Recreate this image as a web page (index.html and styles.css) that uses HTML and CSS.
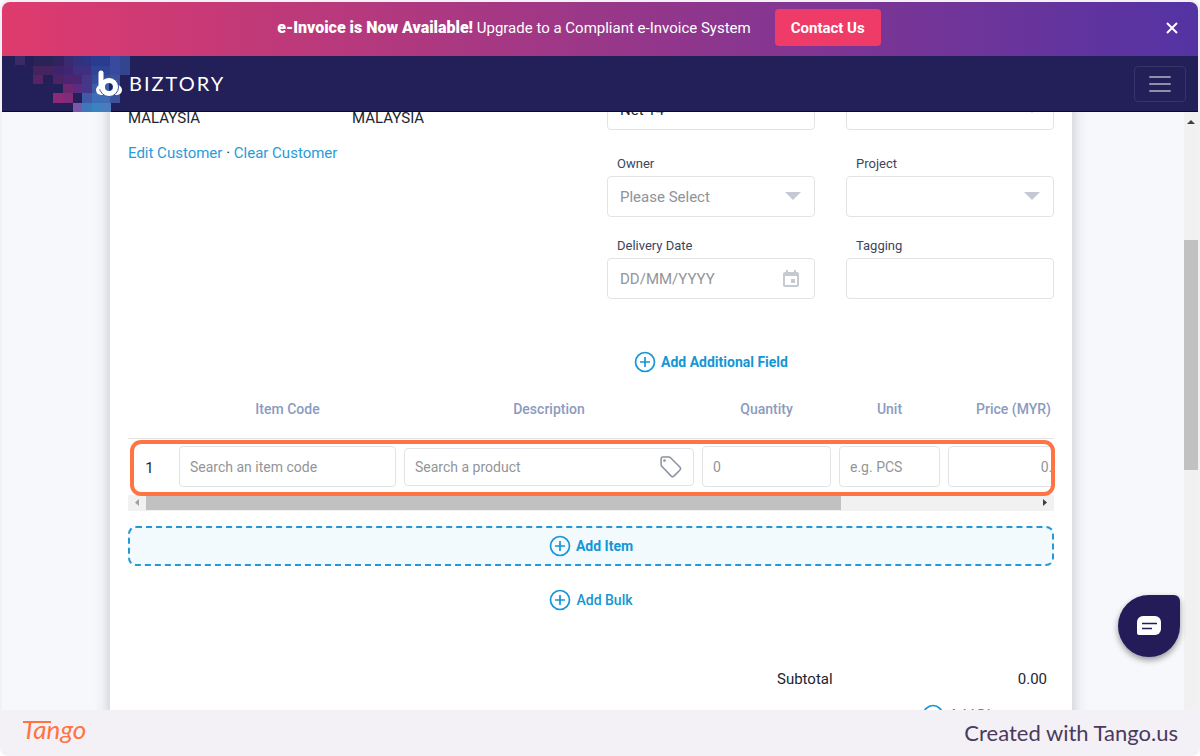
FILE: index.html
```html
<!DOCTYPE html>
<html lang="en">
<head>
<meta charset="utf-8">
<meta name="viewport" content="width=device-width, initial-scale=1">
<title>Biztory</title>
<link rel="stylesheet" href="styles.css">
</head>
<body>
<svg class="defs" width="0" height="0" aria-hidden="true">
  <symbol id="plus" viewBox="0 0 22 22"><circle cx="11" cy="11" r="9.5" /><path d="M11 6v10M6 11h10" /></symbol>
  <symbol id="caret" viewBox="0 0 16 8"><path d="M0 0h16L8 8z" /></symbol>
</svg>
<div class="frame">
  <div class="app">
    <div class="banner">
      <div class="banner-main">
        <p class="banner-text"><strong>e-Invoice is Now Available!</strong> Upgrade to a Compliant e-Invoice System</p>
        <button class="contact" type="button">Contact Us</button>
      </div>
      <button class="close" type="button" aria-label="Close">
        <svg width="12" height="12" viewBox="0 0 12 12"><path d="M1 1l10 10M11 1L1 11" /></svg>
      </button>
    </div>
    <header class="nav">
      <a class="brand" href="#" aria-label="Biztory">
        <svg class="mosaic" width="130" height="56" viewBox="0 0 130 56" shape-rendering="crispEdges">
          <path fill="#3a2a66" d="M13 0h10v9H13z" />
          <path fill="#292358" d="M32 0h20v10H32z" />
          <path fill="#30235f" d="M52 0h10v10H52z" />
          <path fill="#3a2a70" d="M62 0h9v10h-9z" />
          <path fill="#33307c" d="M71 0h9v10h-9z" />
          <path fill="#2c3483" d="M80 0h9v10h-9z" />
          <path fill="#2a3c90" d="M89 0h19v10H89z" />
          <path fill="#384a9e" d="M108 0h10v19h-10z" />
          <path fill="#33458f" d="M118 0h10v19h-10z" />
          <path fill="#45235f" d="M31 10h20v9H31z" />
          <path fill="#40246b" d="M51 10h11v9H51z" />
          <path fill="#402672" d="M62 10h9v9h-9z" />
          <path fill="#3d3080" d="M71 10h18v9H71z" />
          <path fill="#2f4494" d="M89 10h19v9H89z" />
          <path fill="#562464" d="M31 19h10v9H31z" />
          <path fill="#4c2364" d="M51 19h11v9H51z" />
          <path fill="#4b2571" d="M62 19h18v9H62z" />
          <path fill="#453688" d="M80 19h10v18H80z" />
          <path fill="#354c9b" d="M90 19h18v9H90z" />
          <path fill="#3b529d" d="M108 19h10v28h-10z" />
          <path fill="#6e286f" d="M61 28h10v9H61z" />
          <path fill="#5b2b82" d="M71 28h9v9h-9z" />
          <path fill="#3e5ba8" d="M90 28h18v9H90z" />
          <path fill="#8d2a77" d="M51 37h10v10H51z" />
          <path fill="#812b7b" d="M61 37h10v10H61z" />
          <path fill="#415aa7" d="M80 37h10v10H80z" />
          <path fill="#3d6db4" d="M90 37h18v10H90z" />
          <path fill="#7a56a8" d="M71 47h9v9h-9z" />
          <path fill="#3f78ba" d="M80 47h10v9H80z" />
          <path fill="#3a83c0" d="M90 47h10v9H90z" />
          <path fill="#4b7bbd" d="M100 47h9v9h-9z" />
        </svg>
        <svg class="mark" width="28" height="27" viewBox="0 0 28 27">
          <rect class="fill" x="1" y="15" width="26" height="10" rx="5" />
          <circle class="fill gap" cx="14" cy="17" r="9.5" />
          <path class="stem" d="M6 3v14" />
          <circle class="ring" cx="14" cy="17" r="6.3" />
          <path class="core" d="M14 13.600a3.400 3.400 0 0 1 0 6.800z" />
        </svg>
        <span class="wordmark">BIZTORY</span>
      </a>
      <button class="menu" type="button" aria-label="Menu">
        <svg width="22" height="18" viewBox="0 0 22 18"><path d="M1 2h20M1 9h20M1 16h20" /></svg>
      </button>
    </header>
    <div class="viewport">
      <main class="page">
        <form class="sheet">
          <div class="top">
            <section class="customer">
              <p>MALAYSIA</p>
              <p>MALAYSIA</p>
              <p class="links"><a href="#">Edit Customer</a> · <a href="#">Clear Customer</a></p>
            </section>
            <section class="fields">
              <div class="control first"><input class="box dark" type="text" value="Net 14" aria-label="Terms"></div>
              <div class="control first"><select class="box" aria-label="Currency"><option></option></select><svg class="caret" width="16" height="8"><use href="#caret" /></svg></div>
              <div class="field">
                <label for="owner">Owner</label>
                <div class="control"><select class="box" id="owner"><option>Please Select</option></select><svg class="caret" width="16" height="8"><use href="#caret" /></svg></div>
              </div>
              <div class="field">
                <label for="project">Project</label>
                <div class="control"><select class="box" id="project"><option></option></select><svg class="caret" width="16" height="8"><use href="#caret" /></svg></div>
              </div>
              <div class="field">
                <label for="delivery">Delivery Date</label>
                <div class="control"><input class="box" id="delivery" type="text" placeholder="DD/MM/YYYY">
                  <svg class="calendar" width="16" height="18" viewBox="0 0 16 18"><path fill-rule="evenodd" d="M3 0h2v2h6V0h2v2h1a2 2 0 0 1 2 2v11a2 2 0 0 1-2 2H2a2 2 0 0 1-2-2V4a2 2 0 0 1 2-2h1zM2 6v9h12V6zM8 9h4v4H8z" /></svg>
                </div>
              </div>
              <div class="field">
                <label for="tagging">Tagging</label>
                <div class="control"><input class="box" id="tagging" type="text"></div>
              </div>
              <button class="add bold" type="button"><svg width="22" height="22"><use href="#plus" /></svg>Add Additional Field</button>
            </section>
          </div>

          <section class="items">
            <div class="table-clip">
              <table>
                <colgroup><col class="c-no"><col class="c-code"><col class="c-desc"><col class="c-qty"><col class="c-unit"><col class="c-price"></colgroup>
                <thead><tr><th></th><th>Item Code</th><th>Description</th><th>Quantity</th><th>Unit</th><th>Price (MYR)</th></tr></thead>
                <tbody><tr>
                  <td class="no">1</td>
                  <td><input class="box" type="text" placeholder="Search an item code" aria-label="Item Code"></td>
                  <td><div class="control"><input class="box short" type="text" placeholder="Search a product" aria-label="Description">
                    <svg class="tag" width="24" height="24" viewBox="0 0 24 24"><path d="M3.500 2h6.200a3 3 0 0 1 2.100.9l9 9.200a2.200 2.200 0 0 1 0 3.100l-5.700 5.700a2.200 2.200 0 0 1-3.100 0l-9-9.300a3 3 0 0 1-.9-2.100V3.500A1.500 1.500 0 0 1 3.500 2z" /><circle cx="5.500" cy="5.500" r=".6" /></svg></div></td>
                  <td><input class="box" type="text" placeholder="0" aria-label="Quantity"></td>
                  <td><input class="box" type="text" placeholder="e.g. PCS" aria-label="Unit"></td>
                  <td><input class="box right" type="text" placeholder="0.00" aria-label="Price"></td>
                </tr></tbody>
              </table>
            </div>
            <div class="hbar" aria-hidden="true">
              <svg width="18" height="16" viewBox="0 0 18 16"><path fill="#a0a0a0" d="M11 4v7L7 7.500z" /></svg>
              <div class="hthumb"></div>
              <svg width="18" height="16" viewBox="0 0 18 16"><path fill="#404040" d="M7 4v7l4-3.500z" /></svg>
            </div>
            <div class="highlight"></div>
          </section>

          <button class="add bold add-item" type="button"><svg width="22" height="22"><use href="#plus" /></svg>Add Item</button>
          <button class="add medium add-bulk" type="button"><svg width="22" height="22"><use href="#plus" /></svg>Add Bulk</button>

          <section class="totals">
            <div class="subtotal"><span>Subtotal</span><output>0.00</output></div>
            <button class="add medium discount" type="button"><svg width="22" height="22"><use href="#plus" /></svg>Add Discount</button>
          </section>
        </form>
      </main>
      <div class="vbar" aria-hidden="true">
        <svg width="14" height="18" viewBox="0 0 14 18"><path fill="#404040" d="M3 12h8L7 8z" /></svg>
        <div class="vthumb"></div>
      </div>
      <button class="chat" type="button" aria-label="Chat">
        <svg width="26" height="20" viewBox="0 0 26 20"><path fill="#fff" d="M7 0h12a6 6 0 0 1 6 6v7a6 6 0 0 1-6 6H3a2 2 0 0 1-2-2V6a6 6 0 0 1 6-6z" /><path class="lines" d="M6 7.500h15M6 12.500h10" /></svg>
      </button>
    </div>
  </div>
  <footer class="foot">
    <svg class="tango" width="80" height="42" viewBox="0 0 80 42" role="img" aria-label="Tango"><text x="2" y="27">Tango</text><path d="M3 10h28" /></svg>
    <span class="credit">Created with Tango.us</span>
  </footer>
</div>
</body>
</html>
```
FILE: styles.css
```css
* { box-sizing: border-box; }
body {
  margin: 0;
  font-family: Roboto, "Liberation Sans", sans-serif;
  font-size: 15px;
  color: #21252f;
  background: #fff;
}
p { margin: 0; }
a { color: #2a9bd8; text-decoration: none; }
button, input, select { font: inherit; }
button { cursor: pointer; padding: 0; border: 0; background: none; }
.defs { position: absolute; }

.frame {
  display: flex;
  flex-direction: column;
  height: 100vh;
  padding: 2px 2px 0;
  background: #f3f1f6;
  border-radius: 8px;
}
.app {
  flex: 1;
  min-height: 0;
  display: flex;
  flex-direction: column;
  overflow: hidden;
  border-radius: 8px 8px 0 0;
}

.banner {
  display: flex;
  align-items: center;
  height: 54px;
  color: #fff;
  background: linear-gradient(90deg, #df3b6d, #5433a4);
}
.banner-main {
  flex: 1;
  display: flex;
  align-items: center;
  justify-content: center;
  gap: 24px;
  padding-bottom: 3px;
}
.banner-text strong { font-size: 16px; font-weight: 900; }
.contact {
  height: 37px;
  padding: 0 16px;
  color: #fff;
  font-weight: 700;
  background: #ee3b68;
  border-radius: 4px;
}
.close { width: 42px; height: 40px; padding-right: 11px; }
.close path { fill: none; stroke: #fff; stroke-width: 2; }

.nav {
  display: flex;
  align-items: center;
  justify-content: space-between;
  height: 56px;
  padding-right: 12px;
  background: #231f58;
  border-bottom: 1px solid #0c0737;
}
.brand {
  position: relative;
  display: flex;
  align-items: center;
  gap: 6px;
  height: 56px;
  padding-left: 93px;
  color: #fff;
}
.mosaic { position: absolute; left: 0; top: 0; }
.mark, .wordmark { position: relative; }
.mark .fill { fill: #fff; }
.mark .gap { stroke: #35509c; stroke-width: 1; }
.mark .stem { fill: none; stroke: #fff; stroke-width: 5; stroke-linecap: round; }
.mark .ring { fill: #3a62ac; stroke: #fff; stroke-width: 4.5; }
.mark .core { fill: #231f58; }
.wordmark { padding-bottom: 2px; font-family: Lato, sans-serif; font-size: 20px; letter-spacing: 2px; }
.menu {
  width: 52px;
  height: 36px;
  border: 1px solid #38346a;
  border-radius: 4px;
}
.menu svg { display: block; margin: auto; }
.menu path { stroke: #918fac; stroke-width: 2; stroke-linecap: round; }

.viewport { position: relative; flex: 1; min-height: 0; display: flex; overflow: hidden; }
.page { flex: 1; min-width: 0; padding: 0 112px 0 108px; background: #f7f8fc; }
.sheet {
  margin-top: -23px;
  padding: 0 18px 40px;
  background: #fff;
  box-shadow: 0 0 14px rgba(40, 45, 70, .28);
}
.top { display: flex; justify-content: space-between; }
.customer {
  display: grid;
  grid-template-columns: 224px 200px;
  align-content: start;
  row-gap: 15px;
  padding-top: 19px;
  line-height: 20px;
}
.links { grid-column: 1 / 3; }
.fields {
  display: grid;
  grid-template-columns: 208px 208px;
  column-gap: 31px;
  row-gap: 17px;
}
.first { margin-bottom: 5px; }
.field label {
  display: block;
  height: 24px;
  padding-left: 10px;
  font-size: 13px;
  line-height: 23px;
  color: #3c4560;
}
.control { position: relative; }
.box {
  display: block;
  width: 100%;
  height: 41px;
  padding: 0 10px;
  font-size: 14px;
  color: #8f9297;
  background: #fff;
  border: 1px solid #e2e3e6;
  border-radius: 4px;
  appearance: none;
}
.fields .box { padding: 0 12px; font-size: 15px; }
.box.dark { color: #21252f; }
.box.short { height: 38px; }
.box.right { text-align: right; }
.box::placeholder { color: #939598; opacity: 1; }
.caret { position: absolute; right: 14px; top: 16px; fill: #c5cad2; }
.calendar { position: absolute; right: 16px; top: 12px; fill: #c5cad2; }
.tag { position: absolute; right: 11px; top: 7px; fill: none; stroke: #8a90a0; stroke-width: 1.5; }

.add {
  display: flex;
  align-items: center;
  justify-content: center;
  gap: 5px;
  font-size: 14px;
  color: #1596d5;
  white-space: nowrap;
}
.add svg { fill: none; stroke: #1596d5; stroke-width: 1.7; }
.bold { font-weight: 700; }
.medium { font-weight: 500; }
.fields .add { height: 24px; margin-top: 34px; }

.items { position: relative; margin-top: 17px; }
.table-clip { overflow: hidden; }
table { width: 955px; table-layout: fixed; border-collapse: collapse; }
.c-no { width: 47px; }
.c-code { width: 225px; }
.c-desc { width: 298px; }
.c-qty { width: 137px; }
.c-unit { width: 109px; }
.c-price { width: 139px; }
th {
  height: 47px;
  padding: 0 0 11px;
  font-size: 14px;
  font-weight: 500;
  color: #8b9bc0;
  border-bottom: 1px solid #e4e5e8;
}
td { height: 57px; padding: 0 4px; }
.no { padding: 2px 4px 0 0; text-align: center; }
.hbar { display: flex; height: 16px; background: #f1f1f1; }
.hthumb { width: 75%; height: 15px; margin-right: auto; background: #c1c1c1; }
.highlight {
  position: absolute;
  left: 2px;
  right: -1px;
  top: 49px;
  bottom: 15px;
  border: 4px solid #ff7442;
  border-radius: 11px;
  pointer-events: none;
}

.add-item {
  width: 100%;
  height: 40px;
  margin-top: 15px;
  background: #f2fafe;
  border: 2px dashed #2698d6;
  border-radius: 8px;
}
.add-bulk { height: 24px; margin: 22px auto 0; }
.totals { padding: 57px 7px 0 649px; line-height: 20px; }
.subtotal { display: flex; justify-content: space-between; }
.discount { margin: 15px 14px 0 auto; }

.vbar { width: 14px; background: #f1f1f1; }
.vbar svg { display: block; }
.vthumb { height: 230px; margin-top: 110px; background: #c1c1c1; }

.chat {
  position: absolute;
  right: 18px;
  bottom: 53px;
  width: 62px;
  height: 62px;
  background: #231c58;
  border-radius: 50% 6px 50% 50%;
  box-shadow: 0 3px 6px rgba(0, 0, 0, .4);
}
.chat svg { display: block; margin: auto; }
.lines { stroke: #231c58; stroke-width: 1.5; }

.foot {
  display: flex;
  align-items: center;
  justify-content: space-between;
  height: 46px;
  padding: 0 20px 0 18px;
  color: #4a3a5c;
}
.tango text { font-family: Lato, cursive; font-style: italic; font-size: 26px; fill: #ff7442; }
.tango path { stroke: #ff7442; stroke-width: 2; }
.credit { padding-bottom: 2px; font-family: Lato, sans-serif; font-size: 22px; }
```
